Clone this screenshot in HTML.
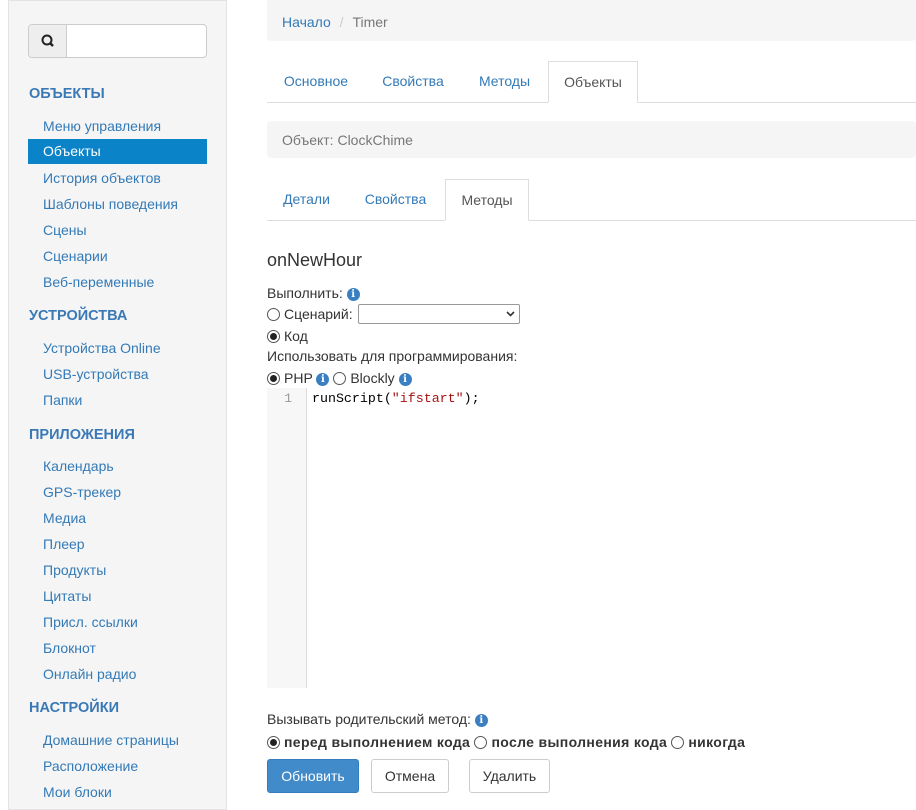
<!DOCTYPE html>
<html><head><meta charset="utf-8"><style>
*{box-sizing:border-box}
body{margin:0;width:916px;height:804px;overflow:hidden;background:#fff;font-family:"Liberation Sans",Arial,sans-serif;font-size:14px;color:#333;position:relative}
.a{position:absolute}
.side{left:8px;top:0;width:219px;height:810px;background:#f5f5f5;border:1px solid #e3e3e3}
.h{position:absolute;left:29px;font-weight:bold;font-size:14.5px;color:#3a79b6}
.l{position:absolute;left:43px;color:#337ab7;white-space:nowrap}
.act{left:28px;width:179px;height:25px;background:#0a83c9;color:#fff;padding:4px 15px;line-height:17px}
.tabs{left:267px;width:649px;height:42px;border-bottom:1px solid #ddd}
.tab{position:absolute;top:0;height:42px;line-height:40px;color:#337ab7;text-align:center}
.tab.on{border:1px solid #ddd;border-bottom-color:#fff;color:#555;background:#fff;height:42px}
.info{display:inline-block;width:13px;height:13px;border-radius:50%;background:#3a7fc1;color:#fff;font-size:10px;font-weight:bold;text-align:center;line-height:13px;font-family:"DejaVu Serif",serif;vertical-align:1px}
.rad{display:inline-block;width:13px;height:13px;border:1px solid #555;border-radius:50%;vertical-align:-2px;position:relative;margin-right:4px}
.rad.c::after{content:"";position:absolute;left:2px;top:2px;width:7px;height:7px;border-radius:50%;background:#222}
.btn{position:absolute;top:759px;height:34px;border:1px solid #ccc;border-radius:3px;line-height:32px;text-align:center;background:#fff;color:#333}
</style></head><body>
<div class="a side"></div>
<div class="a" style="left:28px;top:24px;width:179px;height:34px;border:1px solid #ccc;border-radius:4px;background:#fff"></div>
<div class="a" style="left:29px;top:25px;width:38px;height:32px;background:#eee;border-right:1px solid #ccc;border-radius:3px 0 0 3px">
<svg width="38" height="32"><circle cx="18" cy="15" r="4.5" fill="none" stroke="#222" stroke-width="2"/><line x1="21" y1="18" x2="24" y2="21" stroke="#222" stroke-width="2.5"/></svg></div>
<div class="h" style="top:86px">ОБЪЕКТЫ</div>
<div class="l" style="top:118px">Меню управления</div>
<div class="a act" style="top:139px">Объекты</div>
<div class="l" style="top:170px">История объектов</div>
<div class="l" style="top:196px">Шаблоны поведения</div>
<div class="l" style="top:222px">Сцены</div>
<div class="l" style="top:248px">Сценарии</div>
<div class="l" style="top:274px">Веб-переменные</div>
<div class="h" style="top:308px">УСТРОЙСТВА</div>
<div class="l" style="top:340px">Устройства Online</div>
<div class="l" style="top:366px">USB-устройства</div>
<div class="l" style="top:392px">Папки</div>
<div class="h" style="top:427px">ПРИЛОЖЕНИЯ</div>
<div class="l" style="top:458px">Календарь</div>
<div class="l" style="top:484px">GPS-трекер</div>
<div class="l" style="top:510px">Медиа</div>
<div class="l" style="top:536px">Плеер</div>
<div class="l" style="top:562px">Продукты</div>
<div class="l" style="top:588px">Цитаты</div>
<div class="l" style="top:614px">Присл. ссылки</div>
<div class="l" style="top:640px">Блокнот</div>
<div class="l" style="top:666px">Онлайн радио</div>
<div class="h" style="top:700px">НАСТРОЙКИ</div>
<div class="l" style="top:732px">Домашние страницы</div>
<div class="l" style="top:758px">Расположение</div>
<div class="l" style="top:784px">Мои блоки</div>

<div class="a" style="left:267px;top:0;width:649px;height:41px;background:#f5f5f5;border-radius:0 0 4px 4px;padding:14px 15px;line-height:17px"><span style="color:#337ab7">Начало</span> <span style="color:#ccc;padding:0 5px">/</span> <span style="color:#777">Timer</span></div>
<div class="a tabs" style="top:61px">
<div class="tab" style="left:0;width:98px">Основное</div>
<div class="tab" style="left:98px;width:96px">Свойства</div>
<div class="tab" style="left:194px;width:87px">Методы</div>
<div class="tab on" style="left:281px;width:90px">Объекты</div>
</div>
<div class="a" style="left:267px;top:121px;width:649px;height:37px;background:#f5f5f5;border-radius:4px;padding:11px 15px;line-height:17px;color:#777">Объект: ClockChime</div>
<div class="a tabs" style="top:179px">
<div class="tab" style="left:0;width:79px">Детали</div>
<div class="tab" style="left:79px;width:99px">Свойства</div>
<div class="tab on" style="left:178px;width:84px">Методы</div>
</div>
<div class="a" style="left:267px;top:250px;font-size:18px">onNewHour</div>
<div class="a" style="left:267px;top:283px;line-height:20px">Выполнить: <span class="info">i</span></div>
<div class="a" style="left:267px;top:304px;line-height:20px"><span class="rad"></span>Сценарий: <span style="display:inline-block;width:162px;height:20px;border:1px solid #999;border-radius:2px;vertical-align:-5px;position:relative;margin-left:2px"><svg style="position:absolute;right:4px;top:5px" width="9" height="8"><path d="M1 2l3.5 3.5L8 2" fill="none" stroke="#333" stroke-width="1.6"/></svg></span></div>
<div class="a" style="left:267px;top:326px;line-height:20px"><span class="rad c"></span>Код</div>
<div class="a" style="left:267px;top:346px;line-height:20px">Использовать для программирования:</div>
<div class="a" style="left:267px;top:368px;line-height:20px"><span class="rad c"></span>PHP <span class="info">i</span> <span class="rad"></span>Blockly <span class="info">i</span></div>
<div class="a" style="left:267px;top:388px;width:40px;height:300px;background:#f7f7f7;border-right:1px solid #ddd;color:#999;font-family:'Liberation Mono',monospace;font-size:13px;text-align:right;padding-right:14px;line-height:22px">1</div>
<div class="a" style="left:312px;top:388px;font-family:'Liberation Mono',monospace;font-size:13.3px;line-height:22px;color:#000">runScript(<span style="color:#a11">"ifstart"</span>);</div>
<div class="a" style="left:267px;top:709px;line-height:20px">Вызывать родительский метод: <span class="info">i</span></div>
<div class="a" style="left:267px;top:732px;line-height:20px;font-weight:bold;letter-spacing:0.35px;white-space:nowrap"><span class="rad c"></span>перед выполнением кода <span class="rad"></span>после выполнения кода <span class="rad"></span>никогда</div>
<div class="btn" style="left:267px;width:92px;background:#428bca;border-color:#357ebd;color:#fff">Обновить</div>
<div class="btn" style="left:371px;width:78px">Отмена</div>
<div class="btn" style="left:469px;width:81px">Удалить</div>
</body></html>
